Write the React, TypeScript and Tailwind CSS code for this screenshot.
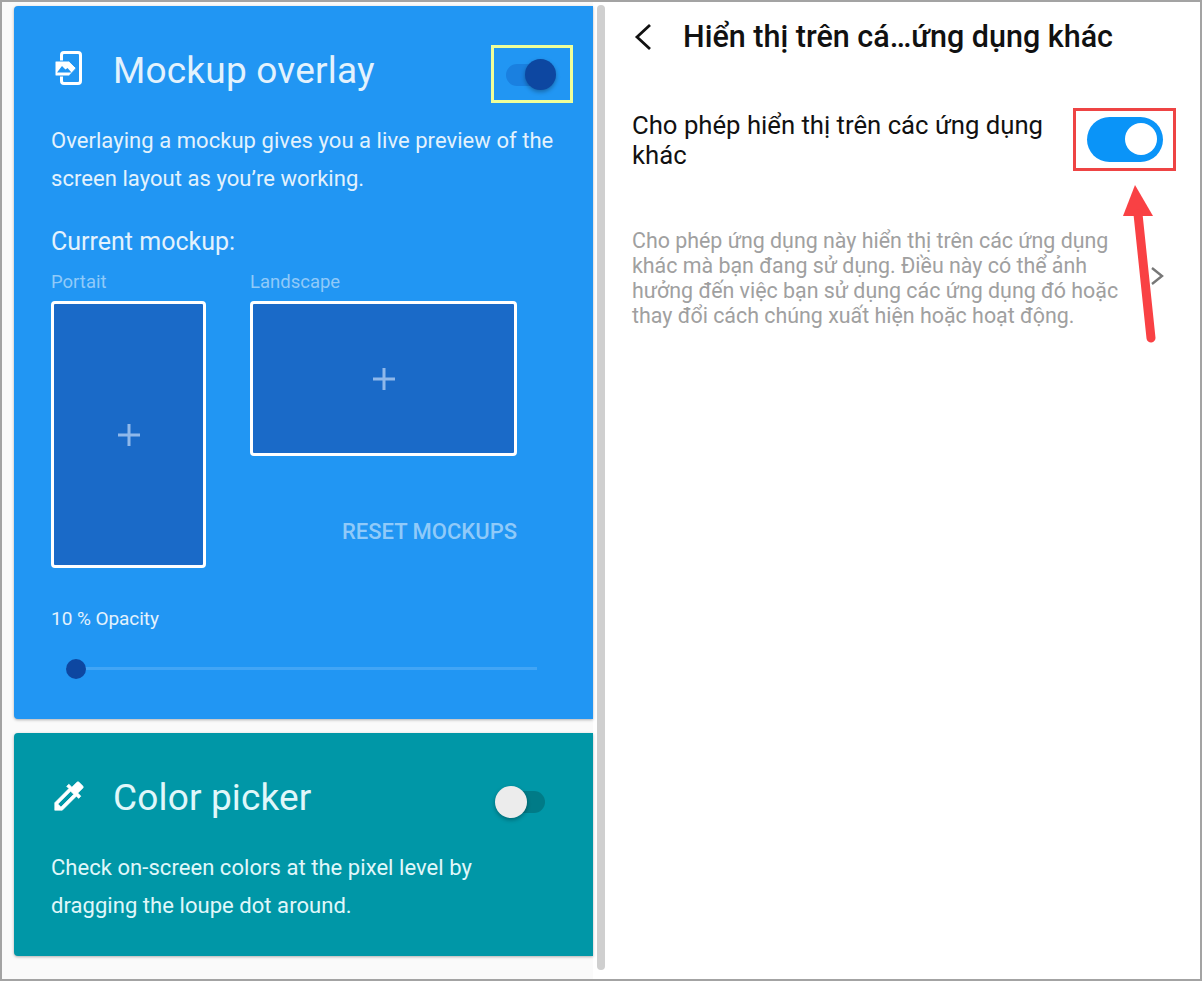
const font = { fontFamily: 'Roboto, sans-serif' };

function Toggle({ on }: { on: boolean }) {
  if (on) {
    return (
      <div className="relative w-[50px] h-8 flex items-center">
        <div className="w-[40px] h-[22px] rounded-full bg-[#1a80e0]" />
        <div className="absolute left-[19px] top-0 w-[31px] h-[31px] rounded-full bg-[#0d47a1] shadow-[0_2px_4px_rgba(0,0,0,0.3)]" />
      </div>
    );
  }
  return (
    <div className="relative w-[50px] h-8 flex items-center justify-end">
      <div className="w-[40px] h-[22px] rounded-full bg-[#007b87]" />
      <div className="absolute left-0 top-0 w-8 h-8 rounded-full bg-[#ececec] shadow-[0_2px_4px_rgba(0,0,0,0.3)]" />
    </div>
  );
}

function MockupBox({ className }: { className: string }) {
  return (
    <div className={`border-[3px] border-white rounded-[4px] bg-[#1a6ac8] flex items-center justify-center ${className}`}>
      <svg width="24" height="24" viewBox="0 0 24 24" stroke="#8fb8ea" strokeWidth="3">
        <path d="M12 1v22M1 12h22" />
      </svg>
    </div>
  );
}

export default function App() {
  return (
    <div style={font} className="relative w-[1202px] h-[981px] bg-white border-2 border-[#a3a3a3] overflow-hidden flex">
      <div className="w-[591px] shrink-0 bg-[#fafafa] pl-3 pt-1 flex flex-col gap-[14px]">
        <section className="h-[713px] bg-[#2196f3] rounded-l-sm shadow-[0_1px_3px_rgba(0,0,0,0.3)] pl-[37px] pr-[39px] pt-[39px] text-[#e3f2fd]">
          <div className="relative flex items-center h-[52px]">
            <svg width="34" height="36" viewBox="0 0 34 36" className="ml-[2px] mb-[4px] shrink-0">
              <rect x="8.5" y="1.5" width="19" height="31" rx="2.5" fill="none" stroke="white" strokeWidth="3" />
              <rect x="0" y="7" width="7" height="20" fill="#2196f3" />
              <path d="M3 10h12.5a1 1 0 0 1 .7.3l6.3 6.2a1 1 0 0 1 0 1.4l-6.3 6.8a1 1 0 0 1-.7.3H3a1 1 0 0 1-1-1V11a1 1 0 0 1 1-1z" fill="white" stroke="#2196f3" strokeWidth="1" />
              <path d="M4 21.5l5-6.5 3.5 3.5 2-1.5 4 4.5z" fill="#2196f3" />
            </svg>
            <h2 className="ml-[26px] text-[37px] leading-[52px] font-normal tracking-[0.2px]">Mockup overlay</h2>
            <div className="absolute left-[455px] top-[14px]">
              <Toggle on />
            </div>
          </div>
          <p className="mt-[25px] text-[22px] leading-[38px] w-[520px] tracking-[0.05px]">
            Overlaying a mockup gives you a live preview of the screen layout as you’re working.
          </p>
          <h3 className="mt-[26px] text-[25px] leading-[36px] font-normal">Current mockup:</h3>
          <div className="flex gap-[44px]">
            <div>
              <div className="text-[18.5px] leading-[26px] text-[#90caf9] mt-[9px] mb-[6px]">Portait</div>
              <MockupBox className="w-[155px] h-[267px]" />
            </div>
            <div>
              <div className="text-[18.5px] leading-[26px] text-[#90caf9] mt-[9px] mb-[6px]">Landscape</div>
              <MockupBox className="w-[267px] h-[155px]" />
              <div className="mt-[61px] text-right text-[22px] leading-[30px] font-medium text-[#90caf9]">RESET MOCKUPS</div>
            </div>
          </div>
          <div className="mt-[38px] text-[19px] leading-[26px] -tracking-[0.05px]">10 % Opacity</div>
          <div className="relative mt-[35px] ml-[15px] w-[471px] h-[3px] bg-[#42a5f5]">
            <div className="absolute left-0 top-[-8px] w-5 h-5 rounded-full bg-[#0d47a1]" />
          </div>
        </section>
        <section className="h-[223px] bg-[#0097a7] rounded-l-sm shadow-[0_1px_3px_rgba(0,0,0,0.3)] pl-[37px] pr-[39px] pt-[39px] text-[#e0f7fa]">
          <div className="relative flex items-center h-[52px]">
            <svg width="38" height="38" viewBox="0 0 24 24" className="ml-[-1px] mb-[4px] shrink-0" fill="white" stroke="white" strokeWidth="0.4">
              <path d="M20.71 5.63l-2.34-2.34a1 1 0 0 0-1.41 0l-3.12 3.12-1.93-1.91-1.41 1.41 1.42 1.42L3 16.25V21h4.75l8.92-8.92 1.42 1.42 1.41-1.41-1.92-1.92 3.12-3.12a1 1 0 0 0 .01-1.42zM6.92 19L5 17.08l8.06-8.06 1.92 1.92L6.92 19z" />
            </svg>
            <h2 className="ml-[25px] text-[37px] leading-[52px] font-normal tracking-[0.15px]">Color picker</h2>
            <div className="absolute left-[444px] top-[14px]">
              <Toggle on={false} />
            </div>
          </div>
          <p className="mt-[25px] text-[22px] leading-[38px] w-[500px] tracking-[0.05px]">
            Check on-screen colors at the pixel level by dragging the loupe dot around.
          </p>
        </section>
      </div>

      <div className="w-[15px] shrink-0 flex justify-center pt-[3px] pl-[1px]">
        <div className="w-[8px] h-[965px] bg-[#cfcfcf] rounded-sm" />
      </div>

      <div className="flex-1 relative pl-[24px] pr-[30px]">
        <div className="flex items-center h-[70px]">
          <svg width="20" height="28" viewBox="0 0 20 28" fill="none" stroke="#111" strokeWidth="2.8" className="ml-[1px]">
            <path d="M17 2L4 14l13 12" />
          </svg>
          <h1 className="ml-[30px] text-[30.5px] leading-[36px] font-medium text-[#111] whitespace-nowrap">Hiển thị trên cá…ứng dụng khác</h1>
        </div>
        <div className="flex items-start mt-[38px]">
          <p className="w-[440px] text-[25.7px] leading-[30px] text-[#111]">Cho phép hiển thị trên các ứng dụng khác</p>
          <div className="ml-[15px] mt-[7px] w-[76px] h-[45px] rounded-full bg-[#0a94f8] relative">
            <div className="absolute right-[6px] top-[6px] w-8 h-8 rounded-full bg-white" />
          </div>
        </div>
        <div className="flex items-center mt-[58px]">
          <p className="w-[490px] text-[21.4px] leading-[25px] text-[#a0a0a0]">
            Cho phép ứng dụng này hiển thị trên các ứng dụng khác mà bạn đang sử dụng. Điều này có thể ảnh hưởng đến việc bạn sử dụng các ứng dụng đó hoặc thay đổi cách chúng xuất hiện hoặc hoạt động.
          </p>
          <svg width="14" height="20" viewBox="0 0 14 20" fill="none" stroke="#777" strokeWidth="2.4" className="ml-[28px] mb-[4px]">
            <path d="M2 2l10 8-10 8" />
          </svg>
        </div>
      </div>

      {/* annotations */}
      <div className="absolute left-[489px] top-[43px] w-[82px] h-[58px] border-[3px] border-[#eeff99]" />
      <div className="absolute left-[1071px] top-[106px] w-[103px] h-[63px] border-[3px] border-[#ee4444]" />
      <svg width="50" height="170" viewBox="0 0 50 170" className="absolute left-[1113px] top-[178px]">
        <path d="M20 5L38 36H8z" fill="#f94144" />
        <path d="M23 34L36 158" stroke="#f94144" strokeWidth="9" strokeLinecap="round" fill="none" />
      </svg>
    </div>
  );
}
